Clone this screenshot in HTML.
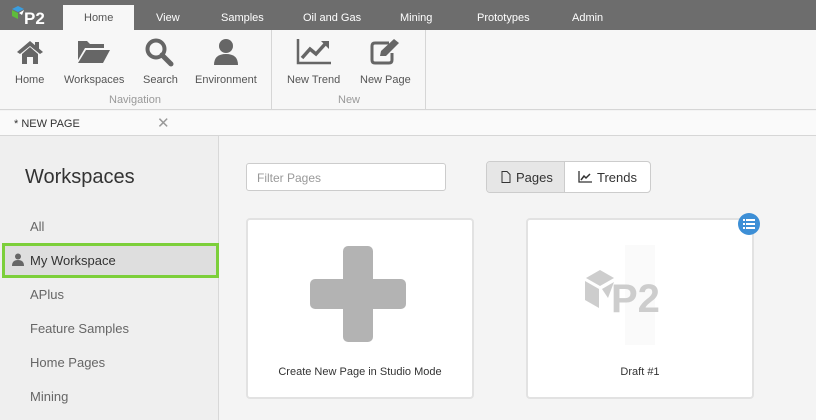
<!DOCTYPE html>
<html><head><style>
*{margin:0;padding:0;box-sizing:border-box}
body{width:816px;height:420px;overflow:hidden;font-family:"Liberation Sans",sans-serif;background:#f4f4f4;position:relative}
.a{position:absolute}
.top{left:0;top:0;width:816px;height:30px;background:#6d6d6d}
.tab{top:12px;font-size:11px;color:#fff}
.rib{left:0;top:30px;width:816px;height:80px;background:#f7f7f7;border-bottom:1px solid #d6d6d6}
.lbl{font-size:11px;color:#555;top:74px}
.grp{font-size:11px;color:#999;top:94px}
.ws{font-size:13px;color:#666;left:30px}
</style></head><body>
<div class="a top"></div>
<svg class="a" style="left:10px;top:5px" width="40" height="22" viewBox="0 0 40 22"><path d="M2 4 L8 1 L14 4 L8 7Z" fill="#3a9ee0"/><path d="M2 5 L8 8 L8 14 L2 11Z" fill="#5ebc3c"/><path d="M9 8 L14 5 L12 10Z" fill="#fff"/><text x="14" y="19" font-family="Liberation Sans" font-weight="bold" font-size="17" fill="#fff">P2</text></svg>
<div class="a" style="left:63px;top:5px;width:71px;height:25px;background:#f7f7f7"></div>
<div class="a tab" style="left:84px;color:#555">Home</div>
<div class="a tab" style="left:156px">View</div>
<div class="a tab" style="left:221px">Samples</div>
<div class="a tab" style="left:303px">Oil and Gas</div>
<div class="a tab" style="left:400px">Mining</div>
<div class="a tab" style="left:477px">Prototypes</div>
<div class="a tab" style="left:572px">Admin</div>
<div class="a rib"></div>
<div class="a" style="left:271px;top:30px;width:1px;height:80px;background:#d6d6d6"></div>
<div class="a" style="left:425px;top:30px;width:1px;height:80px;background:#d6d6d6"></div>
<svg class="a" style="left:15px;top:38px" width="30" height="28" viewBox="0 0 30 28"><path d="M2 14 L15 3 L28 14 L25 16 L15 8 L5 16Z M20 4h4v7l-4-3z M7 16 L15 9 L23 16 V26 H18 V19 H12 V26 H7Z" fill="#666"/></svg>
<svg class="a" style="left:77px;top:38px" width="34" height="26" viewBox="0 0 34 26"><path d="M1 3 H10 L13 6 H27 V10 H8 L1 22Z M9 12 H33 L26 25 H1Z" fill="#666"/></svg>
<svg class="a" style="left:144px;top:37px" width="32" height="30" viewBox="0 0 32 30"><circle cx="12" cy="12" r="8.5" fill="none" stroke="#666" stroke-width="4"/><path d="M18 18 L27 27" stroke="#666" stroke-width="5" stroke-linecap="round"/></svg>
<svg class="a" style="left:212px;top:38px" width="28" height="28" viewBox="0 0 28 28"><circle cx="14" cy="8" r="7" fill="#666"/><path d="M2 27 Q2 16 14 16 Q26 16 26 27Z" fill="#666"/></svg>
<svg class="a" style="left:296px;top:38px" width="36" height="27" viewBox="0 0 36 27"><path d="M2 1 V25 H35" fill="none" stroke="#666" stroke-width="2.5"/><path d="M6 20 L14 11 L20 16 L30 5" fill="none" stroke="#666" stroke-width="3.5"/><path d="M25 3 H33 V11Z" fill="#666"/></svg>
<svg class="a" style="left:369px;top:37px" width="32" height="30" viewBox="0 0 32 30"><path d="M20 6 H6 Q3 6 3 9 V23 Q3 26 6 26 H20 Q23 26 23 23 V16" fill="none" stroke="#666" stroke-width="3"/><path d="M11 19 L12 14 L25 2 L30 6 L17 19Z" fill="#666"/></svg>
<div class="a lbl" style="left:15px">Home</div>
<div class="a lbl" style="left:64px">Workspaces</div>
<div class="a lbl" style="left:143px">Search</div>
<div class="a lbl" style="left:195px">Environment</div>
<div class="a lbl" style="left:287px">New Trend</div>
<div class="a lbl" style="left:360px">New Page</div>
<div class="a grp" style="left:109px">Navigation</div>
<div class="a grp" style="left:338px">New</div>
<div class="a" style="left:0;top:111px;width:816px;height:25px;background:#fafafa;border-bottom:1px solid #d6d6d6"></div>
<div class="a" style="left:14px;top:118px;font-size:11px;color:#333">* NEW PAGE</div>
<div class="a" style="left:157px;top:114px;font-size:15px;color:#999">✕</div>
<div class="a" style="left:0;top:136px;width:219px;height:284px;background:#efefef;border-right:1px solid #d8d8d8"></div>
<div class="a" style="left:25px;top:166px;font-size:20px;color:#333">Workspaces</div>
<div class="a ws" style="top:219px">All</div>
<div class="a" style="left:2px;top:243px;width:217px;height:35px;background:#dedede;border:3px solid #7ccf3a"></div>
<svg class="a" style="left:12px;top:253px" width="12" height="13" viewBox="0 0 12 13"><circle cx="6" cy="3.5" r="3" fill="#666"/><path d="M0 13 Q0 7 6 7 Q12 7 12 13Z" fill="#666"/></svg>
<div class="a ws" style="top:253px;color:#333">My Workspace</div>
<div class="a ws" style="top:287px">APlus</div>
<div class="a ws" style="top:321px">Feature Samples</div>
<div class="a ws" style="top:355px">Home Pages</div>
<div class="a ws" style="top:389px">Mining</div>
<div class="a" style="left:246px;top:163px;width:200px;height:28px;background:#fff;border:1px solid #ccc;border-radius:3px;font-size:12px;color:#999;padding:7px 10px">Filter Pages</div>
<div class="a" style="left:486px;top:161px;width:165px;height:32px;background:#fff;border:1px solid #ccc;border-radius:4px;overflow:hidden">
<div class="a" style="left:0;top:0;width:78px;height:30px;background:#e6e6e6;border-right:1px solid #ccc"></div>
<svg class="a" style="left:14px;top:9px" width="10" height="12" viewBox="0 0 10 12"><path d="M1 .5 H6 L9 3.5 V11.5 H1Z" fill="none" stroke="#333"/></svg>
<div class="a" style="left:29px;top:8px;font-size:13px;color:#333">Pages</div>
<svg class="a" style="left:91px;top:9px" width="14" height="12" viewBox="0 0 14 12"><path d="M1 0 V11 H14" fill="none" stroke="#333" stroke-width="1.3"/><path d="M3 9 L6 5 L8 7 L12 3" fill="none" stroke="#333" stroke-width="1.5"/></svg>
<div class="a" style="left:110px;top:8px;font-size:13px;color:#333">Trends</div>
</div>
<div class="a" style="left:246px;top:218px;width:228px;height:181px;background:#fff;border:2px solid #e2e2e2;border-radius:4px"></div>
<svg class="a" style="left:310px;top:246px" width="96" height="96" viewBox="0 0 96 96"><rect x="33" y="0" width="30" height="96" rx="5" fill="#b3b3b3"/><rect x="0" y="33" width="96" height="30" rx="5" fill="#b3b3b3"/></svg>
<div class="a" style="left:246px;top:366px;width:228px;text-align:center;font-size:11px;color:#333">Create New Page in Studio Mode</div>
<div class="a" style="left:526px;top:218px;width:228px;height:181px;background:#fff;border:2px solid #e2e2e2;border-radius:4px"></div>
<div class="a" style="left:625px;top:245px;width:30px;height:100px;background:#fafafa"></div>
<svg class="a" style="left:584px;top:266px" width="100" height="50" viewBox="0 0 100 50"><path d="M2 12 L16 4 L30 12 L16 20Z" fill="#cdcdcd"/><path d="M1 15 L15 23 L15 42 L1 34Z" fill="#cdcdcd"/><path d="M18 23 L30 16 L24 32Z" fill="#cdcdcd"/><text x="27" y="46" font-family="Liberation Sans" font-weight="bold" font-size="40" fill="#cdcdcd">P2</text></svg>
<div class="a" style="left:526px;top:366px;width:228px;text-align:center;font-size:11px;color:#333">Draft #1</div>
<svg class="a" style="left:738px;top:213px" width="22" height="22" viewBox="0 0 22 22"><circle cx="11" cy="11" r="11" fill="#3d8fd6"/><g fill="#fff"><rect x="5" y="6" width="2" height="2"/><rect x="8" y="6" width="9" height="2"/><rect x="5" y="10" width="2" height="2"/><rect x="8" y="10" width="9" height="2"/><rect x="5" y="14" width="2" height="2"/><rect x="8" y="14" width="9" height="2"/></g></svg>
</body></html>
